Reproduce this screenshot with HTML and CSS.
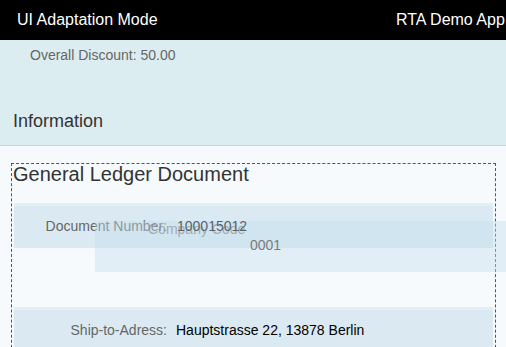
FILE: index.html
```html
<!DOCTYPE html>
<html>
<head>
<meta charset="utf-8">
<link rel="stylesheet" href="styles.css">
</head>
<body>
<header class="shell">
  <div class="shell-title">UI Adaptation Mode</div>
  <div class="shell-app">RTA Demo App</div>
</header>
<section class="summary">
  <div class="discount">Overall Discount: 50.00</div>
  <div class="section-title">Information</div>
</section>
<main class="content">
  <div class="group">
    <div class="group-title">General Ledger Document</div>
    <div class="row band">
      <span class="label">Document Number:</span>
      <span class="value">100015012</span>
    </div>
    <div class="row empty"></div>
    <div class="row band">
      <span class="label">Ship-to-Adress:</span>
      <span class="value">Hauptstrasse 22, 13878 Berlin</span>
    </div>
  </div>
  <div class="ghost">
    <div class="ghost-label">Company Code</div>
    <div class="ghost-value">0001</div>
  </div>
</main>
</body>
</html>
```
FILE: styles.css
```css
html, body {
  margin: 0;
  padding: 0;
  width: 506px;
  height: 347px;
  overflow: hidden;
  font-family: "Liberation Sans", Arial, sans-serif;
  background: #f6fafc;
}
.shell {
  height: 40px;
  background: #000;
  color: #fff;
  display: flex;
  align-items: center;
  padding-left: 17px;
  font-size: 16px;
  white-space: nowrap;
  overflow: hidden;
}
.shell-title {
  flex: 0 0 379px;
}
.shell-app {
  flex: 0 0 auto;
}
.summary {
  background: #dcedf2;
  border-bottom: 1px solid #cdd3d6;
  padding: 7px 0 14px 0;
  height: 84px;
}
.discount {
  padding-left: 30px;
  font-size: 14px;
  line-height: 16px;
  color: #666;
}
.section-title {
  margin-top: 48px;
  padding-left: 13px;
  font-size: 18px;
  line-height: 20px;
  color: #333;
}
.content {
  position: relative;
  padding-top: 17px;
}
.group {
  margin-left: 11px;
  width: 485px;
  box-sizing: border-box;
  border: 1px dashed #2f6275;
  height: 200px;
}
.group-title {
  padding-left: 1px;
  font-size: 20px;
  line-height: 20px;
  color: #333;
}
.row {
  margin: 0 2px;
  display: grid;
  grid-template-columns: 153px 1fr;
  column-gap: 10px;
  align-items: center;
  font-size: 14px;
}
.band {
  height: 45px;
  background: linear-gradient(#e2eff5 0, #e2eff5 3px, #dbeaf2 3px);
}
.group-title + .band {
  margin-top: 19px;
}
.empty {
  height: 59px;
}
.label {
  text-align: right;
  color: #666;
}
.value {
  color: #000;
}
.band:last-child .value {
  margin-left: -1px;
}
.ghost {
  position: absolute;
  left: 95px;
  top: 75px;
  width: 420px;
  height: 51px;
  background: rgba(196, 222, 238, 0.42);
  font-size: 14px;
  line-height: 16px;
}
.ghost-label {
  padding-left: 53px;
  color: rgba(120, 120, 120, 0.55);
}
.ghost-value {
  padding-left: 155px;
  color: #7a7a7a;
}
```
